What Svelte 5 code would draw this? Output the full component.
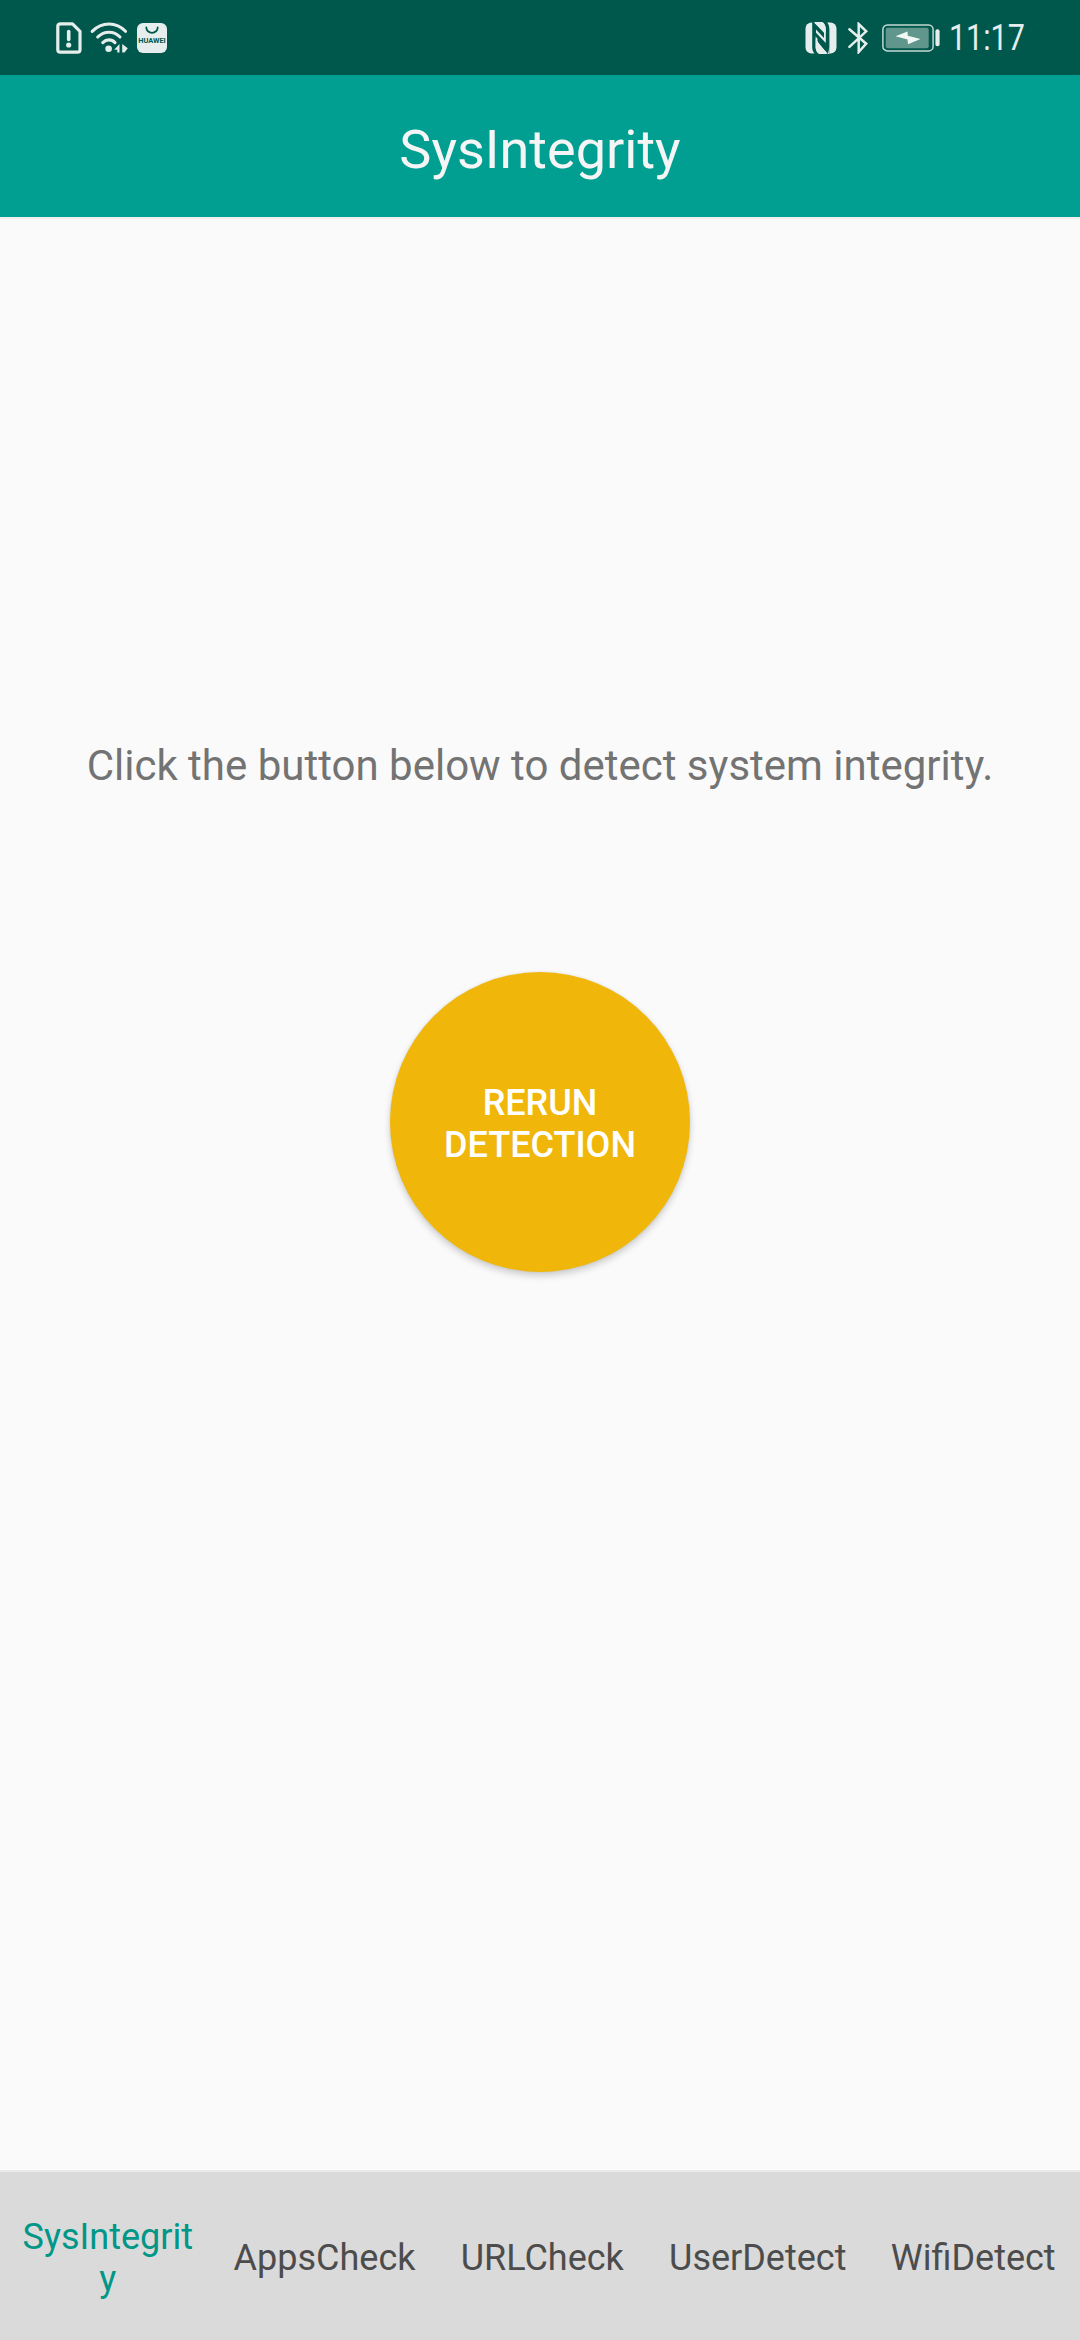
<script>
  const tabs = ['SysIntegrity', 'AppsCheck', 'URLCheck', 'UserDetect', 'WifiDetect'];
  let active = $state(0);
</script>

<div class="screen">
  <header class="status">
    <div class="cluster">
      <svg class="sim" width="26" height="32" viewBox="0 0 26 32">
        <path d="M4.5 1.8H16.5L24 9.3V27.7Q24 30.2 21.5 30.2H4.3Q1.8 30.2 1.8 27.7V4.3Q1.8 1.8 4.5 1.8Z" fill="none" stroke="#e5eeec" stroke-width="3.2" stroke-linejoin="round" />
        <path d="M12.7 9.5V17.5" stroke="#e5eeec" stroke-width="3.6" stroke-linecap="round" />
        <circle cx="12.7" cy="23" r="2.6" fill="#e5eeec" />
      </svg>
      <svg class="wifi" width="38" height="32" viewBox="0 0 38 32">
        <g fill="none" stroke="#e5eeec" stroke-width="3.1" stroke-linecap="round">
          <path d="M2.2 9.3Q9.5 2 19 2Q28.5 2 35.5 9.3" />
          <path d="M7.7 15Q12.6 10.2 19 10.2Q25.4 10.2 30 15" />
          <path d="M12.8 20.6Q15.5 17.9 19 17.9Q22.5 17.9 25 20.6" />
        </g>
        <circle cx="18.6" cy="26.8" r="3.3" fill="#e5eeec" />
        <path d="M29.5 22V30.5H27.3V27.8H24.2Z M32.2 22L37.8 26.2L34.5 30.5H32.2Z" fill="#e5eeec" />
      </svg>
      <svg class="store" width="30" height="30" viewBox="0 0 30 30">
        <rect width="30" height="30" rx="6" fill="#e5eeec" />
        <path d="M9.3 4.5A5.7 5.3 0 0 0 20.7 4.5" fill="none" stroke="#00574b" stroke-width="1.8" stroke-linecap="round" />
        <text x="15" y="20" text-anchor="middle" textLength="27.5" lengthAdjust="spacingAndGlyphs">HUAWEI</text>
      </svg>
    </div>
    <div class="cluster">
      <svg class="nfc" width="32" height="32" viewBox="0 0 32 32">
        <rect x=".5" y=".5" width="31" height="31" rx="6" fill="#e5eeec" />
        <path d="M7 0H8.5L19 10.8V16L11 7.5V10.8L20.8 21V6.5Q20.8 3 18 0H22Q24.4 3 24.4 6.5V32H23.2L12.5 20.5V15.5L20.8 24V26L10.6 14.5V26Q10.6 29 13.5 32H9.7Q7.2 29 7.2 26V1.2Z" fill="#00574b" />
        <path d="M9.2 0H17.2Q20.7 3 20.7 6.5V11.2Z M22.2 32H14.2Q10.7 29 10.7 25.5V17Z" fill="#e5eeec" />
        <path d="M24.4 25V32H23Z" fill="#e5eeec" />
      </svg>
      <svg class="bt" width="22" height="32" viewBox="0 0 22 32">
        <path d="M2.4 7.3L19.2 21.7L11.7 30V2L19.2 9.3L2.4 24.8" fill="none" stroke="#e5eeec" stroke-width="2.5" stroke-linecap="round" stroke-linejoin="miter" />
      </svg>
      <svg class="battery" width="59" height="28" viewBox="0 0 59 28">
        <rect x=".9" y=".9" width="50.2" height="26" rx="4.5" fill="none" stroke="#c4d8d4" stroke-width="1.5" />
        <rect x="3.7" y="3.7" width="43" height="20.5" rx="2" fill="#60968c" />
        <path d="M13.5 12.3L25.5 7.5L25.8 11.8L38.5 15L26 20.2L25.5 15.5Z" fill="#f1f7f5" />
        <rect x="53.4" y="5.3" width="4.2" height="17" rx="2" fill="#e5eeec" />
      </svg>
      <time>11:17</time>
    </div>
  </header>

  <div class="toolbar"><h1>SysIntegrity</h1></div>

  <main>
    <p>Click the button below to detect system integrity.</p>
    <button class="run">RERUN DETECTION</button>
  </main>

  <nav>
    {#each tabs as tab, i}
      <button class="tab" class:active={i === active} onclick={() => (active = i)}><span>{tab}</span></button>
    {/each}
  </nav>
</div>

<style>
  :global(body) { margin: 0; }
  .screen {
    width: 1080px;
    height: 2340px;
    display: flex;
    flex-direction: column;
    background: #fafafa;
    font-family: Roboto, sans-serif;
    overflow: hidden;
  }
  .status {
    height: 75px;
    box-sizing: border-box;
    flex: none;
    display: flex;
    justify-content: space-between;
    align-items: center;
    padding: 0 55px 0 56px;
    background: #00574b;
  }
  .cluster { display: flex; align-items: center; }
  svg { display: block; flex: none; }
  .wifi { margin-left: 8px; }
  .store { margin-left: 9px; }
  .store text { font: 700 7.5px Roboto, sans-serif; fill: #00574b; }
  .bt { margin-left: 10px; }
  .battery { margin-left: 13px; }
  time {
    margin-left: 8px;
    width: 76px;
    font-size: 36px;
    line-height: 42px;
    color: #e5eeec;
    white-space: nowrap;
    transform: scaleX(0.845);
    transform-origin: left center;
  }
  .toolbar {
    height: 142px;
    flex: none;
    display: flex;
    align-items: center;
    justify-content: center;
    background: #009f91;
  }
  h1 {
    margin: 7px 0 0;
    font-size: 54px;
    line-height: 64px;
    font-weight: 400;
    color: #f5f5f5;
  }
  main {
    flex: 1;
    display: flex;
    flex-direction: column;
    align-items: center;
    border-top: 2px solid #f1eeee;
  }
  p {
    margin: 522px 0 0;
    font-size: 42px;
    line-height: 50px;
    color: #737373;
    white-space: nowrap;
  }
  .run {
    margin-top: 181px;
    width: 300px;
    height: 300px;
    padding: 4px 40px 0;
    border: 0;
    border-radius: 50%;
    background: #f0b70a;
    color: #fff;
    font: 500 36px/42px Roboto, sans-serif;
    box-shadow: 0 4px 7px rgba(0, 0, 0, 0.18), 0 0 3px rgba(0, 0, 0, 0.08);
  }
  nav {
    flex: none;
    height: 170px;
    box-sizing: border-box;
    display: grid;
    grid-template-columns: repeat(5, 1fr);
    border-top: 2px solid #eaeaea;
    background: #dadada;
  }
  .tab {
    display: flex;
    align-items: center;
    justify-content: center;
    padding: 4px 20px 0;
    border: 0;
    background: none;
    color: #4c4c4c;
    font: 400 36px/42px Roboto, sans-serif;
    text-align: center;
  }
  .tab span { min-width: 0; max-width: 182px; }
  .tab.active { padding: 4px 19px 0 21px; color: #009788; }
  .tab.active span { max-width: 176px; overflow-wrap: anywhere; }
</style>
